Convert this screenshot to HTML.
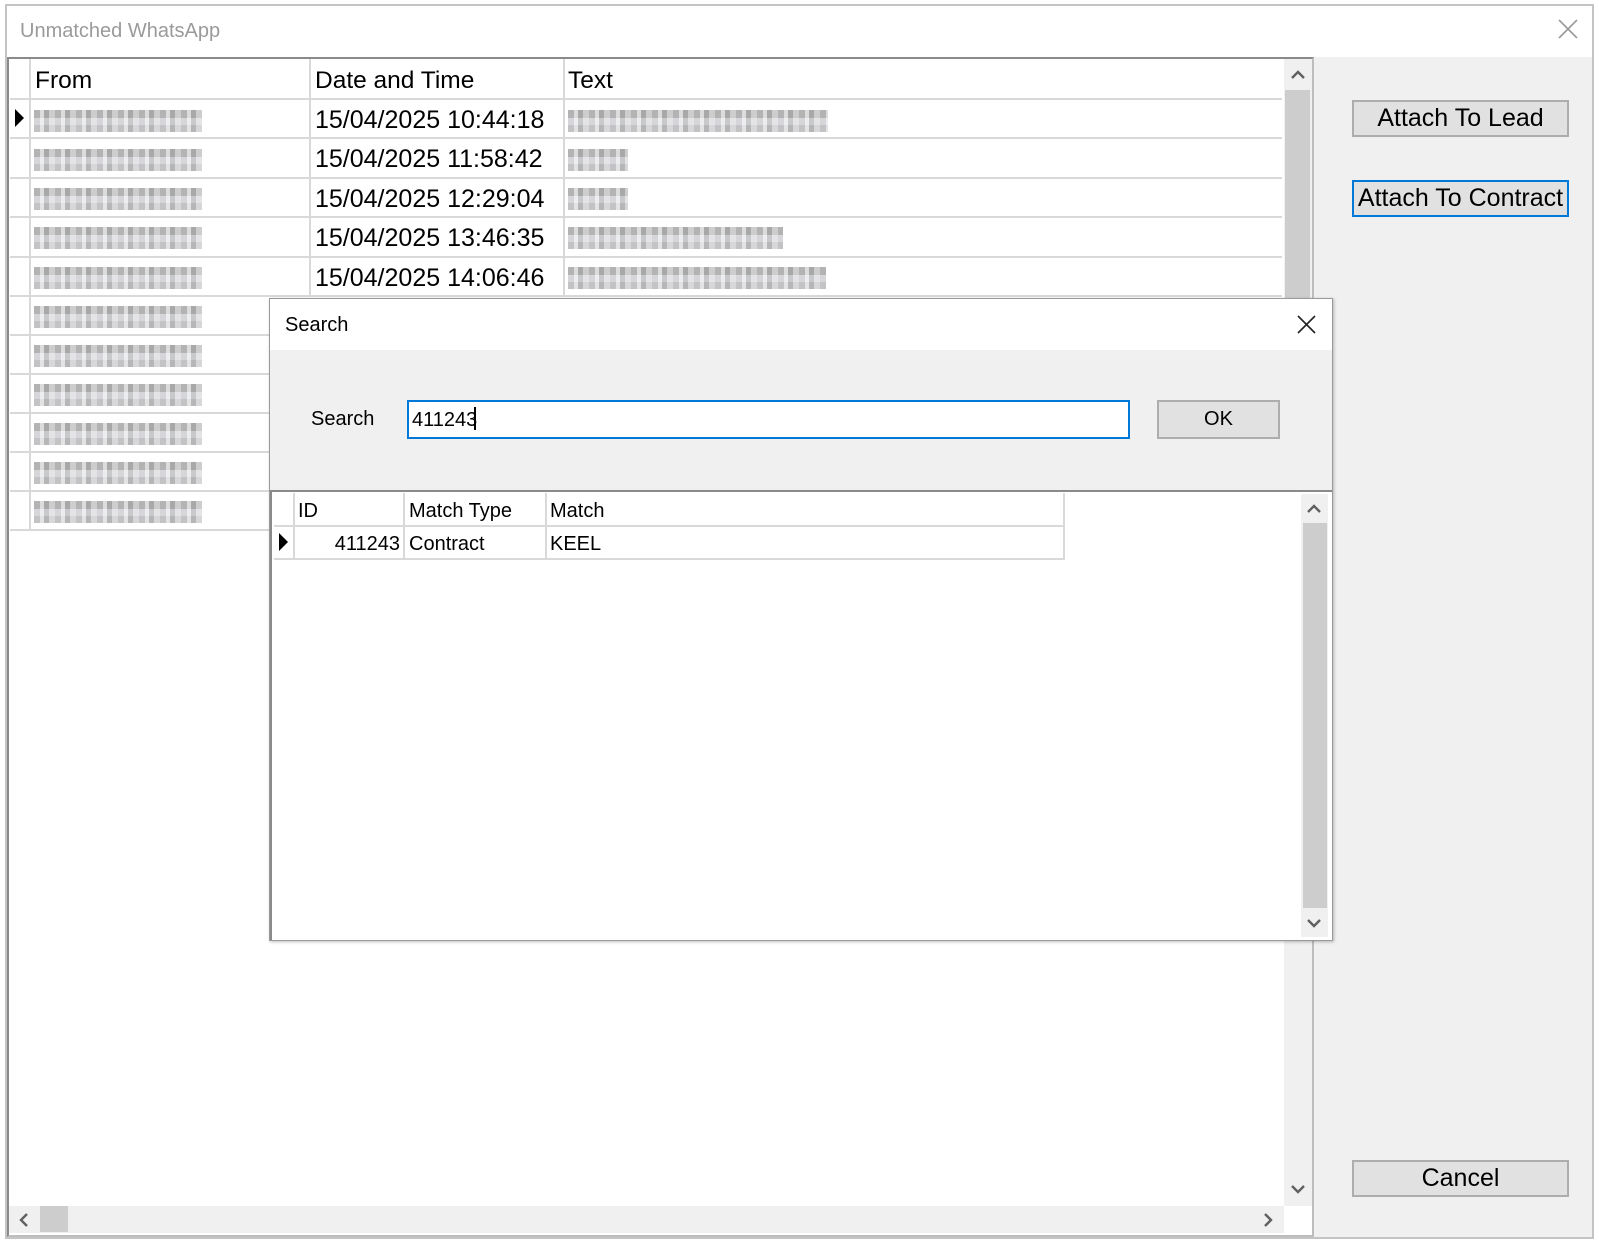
<!DOCTYPE html>
<html><head><meta charset="utf-8">
<style>
*{margin:0;padding:0;box-sizing:border-box}
body{width:1599px;height:1243px;background:#fff;position:relative;overflow:hidden;font-family:"Liberation Sans",sans-serif;color:#000}
.a{position:absolute}
.t{position:absolute;white-space:nowrap;line-height:1}
.hl{position:absolute;height:2px;background:#d9d9d9}
.vl{position:absolute;width:2px;background:#d9d9d9}
.blur{position:absolute;height:22px;opacity:.85;
background:
repeating-linear-gradient(90deg,rgba(255,255,255,.0) 0 6px,rgba(255,255,255,.55) 6px 10px,rgba(0,0,0,.08) 10px 15px,rgba(255,255,255,.35) 15px 21px),
repeating-linear-gradient(0deg,#b9b8bb 0 7px,#cfd0d4 7px 14px,#a8a6a8 14px 22px);}
.btn{position:absolute;background:#e1e1e1;border:2px solid #adadad;font-size:25px;text-align:center}
.chev{position:absolute}
.d{font-size:25px}
.h{font-size:24.5px}
.s{font-size:20px}
</style></head><body>

<div class="a" style="left:5px;top:4px;width:1589px;height:1235px;border:2px solid #c4c4c4;background:#f0f0f0"></div>
<div class="a" style="left:7px;top:6px;width:1585px;height:51px;background:#fff"></div>
<div class="t" style="left:20px;top:21px;font-size:20px;color:#9a9a9a">Unmatched WhatsApp</div>
<svg class="a" style="left:1558px;top:19px" width="20" height="20"><path d="M1 1L19 19M19 1L1 19" stroke="#9a9a9a" stroke-width="1.6"/></svg>

<div class="a" style="left:7px;top:57px;width:1307px;height:1180px;border:2px solid #8a8a8a;border-right-color:#bdbdbd;border-bottom-color:#bdbdbd;background:#fff"></div>
<div class="a" style="left:9px;top:59px;width:1275px;height:1147px;background:#fff"></div>
<div class="t h" style="left:35px;top:69px">From</div>
<div class="t h" style="left:315px;top:69px">Date and Time</div>
<div class="t h" style="left:568px;top:69px">Text</div>
<div class="vl" style="left:29px;top:59px;height:471px"></div>
<div class="vl" style="left:309px;top:59px;height:238px"></div>
<div class="vl" style="left:563px;top:59px;height:238px"></div>
<div class="hl" style="left:10px;top:98px;width:1272px"></div>
<div class="hl" style="left:10px;top:137px;width:1272px"></div>
<div class="hl" style="left:10px;top:177px;width:1272px"></div>
<div class="hl" style="left:10px;top:216px;width:1272px"></div>
<div class="hl" style="left:10px;top:256px;width:1272px"></div>
<div class="hl" style="left:10px;top:295px;width:1272px"></div>
<div class="hl" style="left:10px;top:334px;width:300px"></div>
<div class="hl" style="left:10px;top:373px;width:300px"></div>
<div class="hl" style="left:10px;top:412px;width:300px"></div>
<div class="hl" style="left:10px;top:451px;width:300px"></div>
<div class="hl" style="left:10px;top:490px;width:300px"></div>
<div class="hl" style="left:10px;top:529px;width:300px"></div>
<svg class="a" style="left:15px;top:109px" width="10" height="18"><path d="M0 0L9 9L0 18Z" fill="#000"/></svg>
<div class="t d" style="left:315px;top:108px">15/04/2025 10:44:18</div>
<div class="t d" style="left:315px;top:147px">15/04/2025 11:58:42</div>
<div class="t d" style="left:315px;top:187px">15/04/2025 12:29:04</div>
<div class="t d" style="left:315px;top:226px">15/04/2025 13:46:35</div>
<div class="t d" style="left:315px;top:266px">15/04/2025 14:06:46</div>
<div class="blur" style="left:34px;top:110px;width:168px"></div>
<div class="blur" style="left:34px;top:149px;width:168px"></div>
<div class="blur" style="left:34px;top:188px;width:168px"></div>
<div class="blur" style="left:34px;top:227px;width:168px"></div>
<div class="blur" style="left:34px;top:267px;width:168px"></div>
<div class="blur" style="left:34px;top:306px;width:168px"></div>
<div class="blur" style="left:34px;top:345px;width:168px"></div>
<div class="blur" style="left:34px;top:384px;width:168px"></div>
<div class="blur" style="left:34px;top:423px;width:168px"></div>
<div class="blur" style="left:34px;top:462px;width:168px"></div>
<div class="blur" style="left:34px;top:501px;width:168px"></div>
<div class="blur" style="left:568px;top:110px;width:260px"></div>
<div class="blur" style="left:568px;top:149px;width:60px"></div>
<div class="blur" style="left:568px;top:188px;width:60px"></div>
<div class="blur" style="left:568px;top:227px;width:215px"></div>
<div class="blur" style="left:568px;top:267px;width:258px"></div>

<div class="a" style="left:1284px;top:59px;width:28px;height:1147px;background:#f0f0f0"></div>
<div class="a" style="left:1285px;top:90px;width:25px;height:220px;background:#cdcdcd"></div>
<svg class="chev" style="left:1290px;top:69px" width="16" height="12"><path d="M2 9L8 3L14 9" stroke="#606060" stroke-width="2.4" fill="none"/></svg>
<svg class="chev" style="left:1290px;top:1183px" width="16" height="12"><path d="M2 3L8 9L14 3" stroke="#606060" stroke-width="2.4" fill="none"/></svg>
<div class="a" style="left:9px;top:1206px;width:1275px;height:27px;background:#f0f0f0"></div>
<div class="a" style="left:40px;top:1206px;width:28px;height:26px;background:#cdcdcd"></div>
<svg class="chev" style="left:18px;top:1212px" width="12" height="16"><path d="M9 2L3 8L9 14" stroke="#606060" stroke-width="2.4" fill="none"/></svg>
<svg class="chev" style="left:1262px;top:1212px" width="12" height="16"><path d="M3 2L9 8L3 14" stroke="#606060" stroke-width="2.4" fill="none"/></svg>

<div class="btn" style="left:1352px;top:100px;width:217px;height:37px;line-height:33px">Attach To Lead</div>
<div class="btn" style="left:1352px;top:180px;width:217px;height:37px;line-height:33px;border-color:#0078d7">Attach To Contract</div>
<div class="btn" style="left:1352px;top:1160px;width:217px;height:37px;line-height:33px">Cancel</div>

<div class="a" style="left:269px;top:298px;width:1064px;height:643px;border:1px solid #9a9a9a;background:#f0f0f0;box-shadow:1px 1px 3px rgba(0,0,0,.25)"></div>
<div class="a" style="left:270px;top:299px;width:1062px;height:51px;background:#fff"></div>
<div class="t s" style="left:285px;top:315px">Search</div>
<svg class="a" style="left:1297px;top:315px" width="19" height="19"><path d="M1 1L18 18M18 1L1 18" stroke="#222" stroke-width="1.6"/></svg>
<div class="t s" style="left:311px;top:409px">Search</div>
<div class="a" style="left:407px;top:400px;width:723px;height:39px;background:#fff;border:2px solid #0078d7"></div>
<div class="t s" style="left:412px;top:410px">411243</div>
<div class="a" style="left:474px;top:407px;width:2px;height:23px;background:#000"></div>
<div class="btn" style="left:1157px;top:400px;width:123px;height:39px;line-height:35px;font-size:20px">OK</div>
<div class="a" style="left:270px;top:490px;width:1062px;height:450px;background:#fff;border-top:2px solid #8a8a8a;border-left:2px solid #8a8a8a"></div>
<div class="t s" style="left:298px;top:501px">ID</div>
<div class="t s" style="left:409px;top:501px">Match Type</div>
<div class="t s" style="left:550px;top:501px">Match</div>
<div class="vl" style="left:293px;top:493px;height:66px"></div>
<div class="vl" style="left:403px;top:493px;height:66px"></div>
<div class="vl" style="left:545px;top:493px;height:66px"></div>
<div class="vl" style="left:1063px;top:493px;height:66px"></div>
<div class="hl" style="left:274px;top:525px;width:791px"></div>
<div class="hl" style="left:274px;top:558px;width:791px"></div>
<svg class="a" style="left:279px;top:533px" width="10" height="18"><path d="M0 0L9 9L0 18Z" fill="#000"/></svg>
<div class="t s" style="left:300px;top:534px;width:100px;text-align:right">411243</div>
<div class="t s" style="left:409px;top:534px">Contract</div>
<div class="t s" style="left:550px;top:534px">KEEL</div>
<div class="a" style="left:1301px;top:494px;width:27px;height:443px;background:#f0f0f0"></div>
<div class="a" style="left:1303px;top:523px;width:24px;height:385px;background:#cdcdcd"></div>
<svg class="chev" style="left:1306px;top:503px" width="16" height="12"><path d="M2 9L8 3L14 9" stroke="#606060" stroke-width="2.4" fill="none"/></svg>
<svg class="chev" style="left:1306px;top:917px" width="16" height="12"><path d="M2 3L8 9L14 3" stroke="#606060" stroke-width="2.4" fill="none"/></svg>
</body></html>
